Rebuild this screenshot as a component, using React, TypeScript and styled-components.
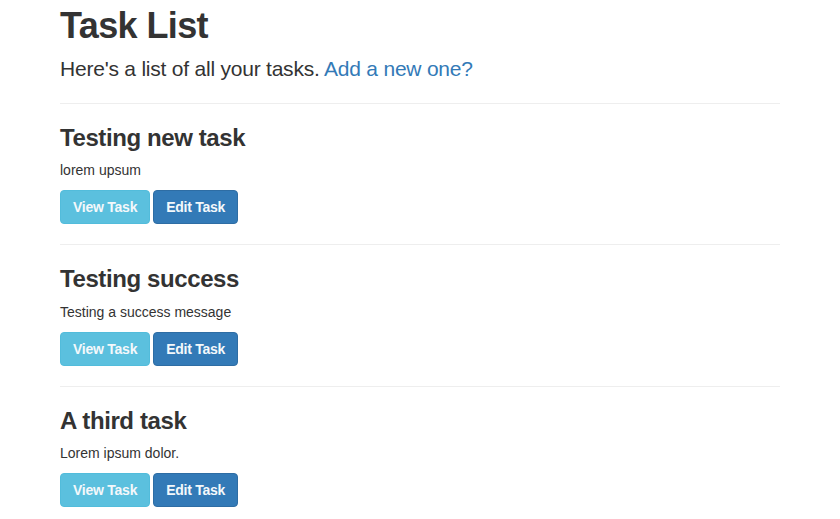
import React from "react";
import styled, { createGlobalStyle } from "styled-components";

const GlobalStyle = createGlobalStyle`
  html, body { margin: 0; padding: 0; background: #fff; }
  body {
    font-family: "Liberation Sans", Arial, sans-serif;
    font-size: 14px;
    line-height: 1.42857;
    color: #333;
  }
  * { box-sizing: border-box; }
`;

const Container = styled.div`
  width: 750px;
  margin: 0 auto;
  padding: 6px 15px 0;
`;

const Title = styled.h1`
  font-size: 36px;
  font-weight: 700;
  line-height: 1.1;
  letter-spacing: -0.6px;
  margin: 0 0 8px;
`;

const Lead = styled.p`
  font-size: 21px;
  font-weight: 300;
  line-height: 1.4;
  letter-spacing: -0.22px;
  margin: 0 0 20px;
`;

const Link = styled.a`
  color: #337ab7;
  text-decoration: none;
`;

const Rule = styled.hr`
  margin: 20px 0;
  border: 0;
  border-top: 1px solid #eee;
  height: 0;
`;

const TaskTitle = styled.h3`
  font-size: 24px;
  font-weight: 700;
  line-height: 1.1;
  letter-spacing: -0.4px;
  margin: 21px 0 10px;
`;

const TaskBody = styled.p`
  margin: 0 0 9px;
`;

const Actions = styled.div`
  display: flex;
  gap: 3px;
`;

const Button = styled.a<{ $variant: "info" | "primary" }>`
  display: inline-block;
  height: 34px;
  padding: 6px 12px;
  font-size: 14px;
  font-weight: 700;
  letter-spacing: -0.25px;
  line-height: 20px;
  color: #f4f8fb;
  text-decoration: none;
  border-radius: 4px;
  border: 1px solid ${(p) => (p.$variant === "info" ? "#52bcdb" : "#2e6da4")};
  background: ${(p) => (p.$variant === "info" ? "#5bc0de" : "#337ab7")};
  cursor: pointer;
`;

const tasks = [
  { title: "Testing new task", body: "lorem upsum" },
  { title: "Testing success", body: "Testing a success message" },
  { title: "A third task", body: "Lorem ipsum dolor." },
];

export default function App() {
  return (
    <>
      <GlobalStyle />
      <Container>
        <Title>Task List</Title>
        <Lead>
          Here's a list of all your tasks. <Link href="#">Add a new one?</Link>
        </Lead>
        {tasks.map((t) => (
          <section key={t.title}>
            <Rule />
            <TaskTitle>{t.title}</TaskTitle>
            <TaskBody>{t.body}</TaskBody>
            <Actions>
              <Button $variant="info" href="#">View Task</Button>
              <Button $variant="primary" href="#">Edit Task</Button>
            </Actions>
          </section>
        ))}
      </Container>
    </>
  );
}
